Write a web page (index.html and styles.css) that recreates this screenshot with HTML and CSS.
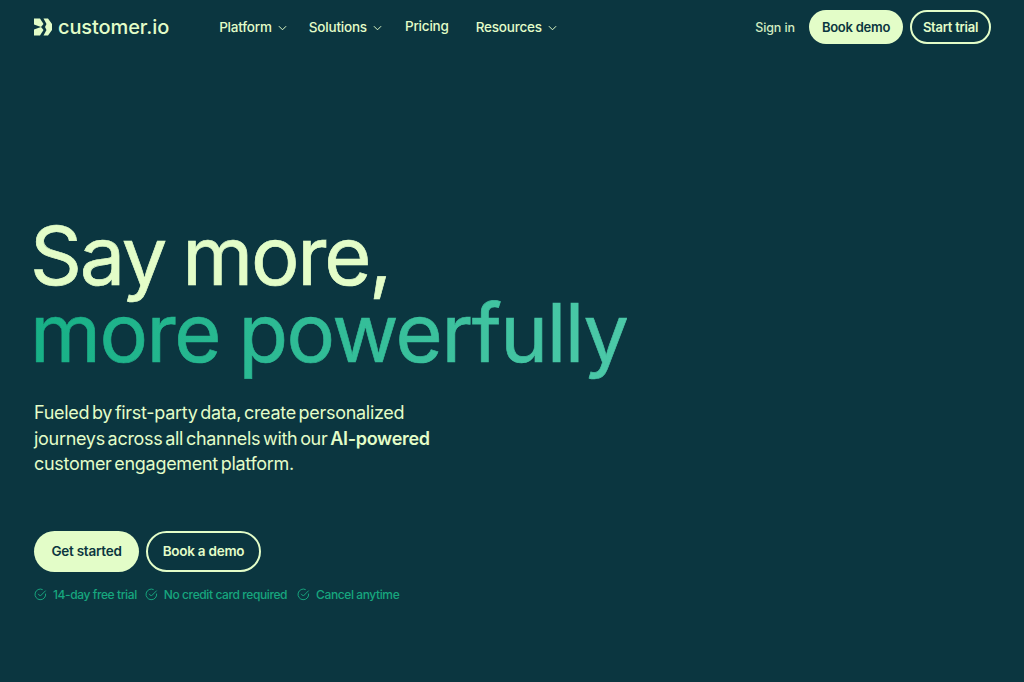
FILE: index.html
```html
<!DOCTYPE html>
<html lang="en">
<head>
  <meta charset="UTF-8">
  <meta name="viewport" content="width=device-width, initial-scale=1.0">
  <title>Customer.io</title>
  <link rel="stylesheet" href="styles.css">
</head>
<body>

<!-- Header -->
<header class="header">
  <a class="logo" href="#">
    <svg class="logo-mark" viewBox="0 0 18 18" width="18" height="18">
      <path fill="#e3fdc8" d="M0 .5h6L9.500 6 7 9 0 6.500z"/>
      <path fill="#e3fdc8" d="M0 17.500h6L9.500 12 7 9l-7 2.500z"/>
      <path fill="#e3fdc8" d="M9.500.5H14L18 6v6l-4 5.500H9.500L12.500 12 11 9l1.500-3z"/>
    </svg>
    <span>customer.io</span>
  </a>
  <nav class="nav">
    <a class="nav-item" href="#">Platform <svg class="chev" viewBox="0 0 10 6" width="9" height="6"><path d="M1 1l4 4 4-4"/></svg></a>
    <a class="nav-item" href="#">Solutions <svg class="chev" viewBox="0 0 10 6" width="9" height="6"><path d="M1 1l4 4 4-4"/></svg></a>
    <a class="nav-item nav-plain" href="#">Pricing</a>
    <a class="nav-item" href="#">Resources <svg class="chev" viewBox="0 0 10 6" width="9" height="6"><path d="M1 1l4 4 4-4"/></svg></a>
  </nav>
  <div class="header-actions">
    <a class="signin" href="#">Sign in</a>
    <a class="btn btn-solid btn-sm" href="#">Book demo</a>
    <a class="btn btn-line btn-sm" href="#">Start trial</a>
  </div>
</header>

<!-- Hero -->
<main class="hero">
  <h1 class="hero-title">Say more,<br><span class="accent">more powerfully</span></h1>
  <p class="hero-text">Fueled by first-party data, create personalized<br>journeys across all channels with our <strong>AI-powered</strong><br>customer engagement platform.</p>
  <div class="hero-buttons">
    <a class="btn btn-solid btn-lg" href="#">Get started</a>
    <a class="btn btn-line btn-lg" href="#">Book a demo</a>
  </div>
  <ul class="perks">
    <li><svg class="check" viewBox="0 0 12 12" width="13" height="13"><path d="M10.700 5.200A4.900 4.900 0 1 1 8 1.500"/><path d="M3.800 5.400l2 2 5-5"/></svg>14-day free trial</li>
    <li><svg class="check" viewBox="0 0 12 12" width="13" height="13"><path d="M10.700 5.200A4.900 4.900 0 1 1 8 1.500"/><path d="M3.800 5.400l2 2 5-5"/></svg>No credit card required</li>
    <li><svg class="check" viewBox="0 0 12 12" width="13" height="13"><path d="M10.700 5.200A4.900 4.900 0 1 1 8 1.500"/><path d="M3.800 5.400l2 2 5-5"/></svg>Cancel anytime</li>
  </ul>
</main>

</body>
</html>
```

FILE: styles.css
```css
* { box-sizing: border-box; }

body {
  margin: 0;
  height: 682px;
  overflow: hidden;
  background: #0b3640;
  color: #e3fdc8;
  font-family: Inter, "Noto Sans", sans-serif;
}

a {
  color: inherit;
  text-decoration: none;
}

.header {
  display: flex;
  align-items: center;
  height: 54px;
  padding: 0 33px 0 34px;
}

.logo {
  display: flex;
  align-items: center;
  gap: 6px;
  font-size: 20px;
  font-weight: 500;
  letter-spacing: -0.1px;
}

.nav {
  display: flex;
  align-items: center;
  gap: 22px;
  margin-left: 50px;
  font-size: 13.500px;
  font-weight: 500;
  letter-spacing: -0.2px;
}

.nav-item {
  display: flex;
  align-items: center;
  gap: 6px;
}

.nav-plain {
  margin-left: 1px;
  margin-right: 5px;
  margin-top: -2px;
}

.chev {
  margin-top: 2px;
  fill: none;
  stroke: #e3fdc8;
  stroke-width: 1.100;
}

.header-actions {
  display: flex;
  align-items: center;
  gap: 7px;
  margin-left: auto;
  font-size: 12.500px;
  font-weight: 500;
}

.signin {
  margin-right: 7px;
  color: #d3ecc0;
  letter-spacing: -0.1px;
}

.btn {
  display: flex;
  align-items: center;
  justify-content: center;
  border-radius: 999px;
  font-weight: 600;
  letter-spacing: -0.25px;
}

.btn-solid {
  background: #e3fdc8;
  color: #0b3640;
}

.btn-line {
  border: 2px solid #e3fdc8;
  color: #e3fdc8;
}

.btn-sm {
  height: 34px;
  font-size: 13px;
}

.btn-sm.btn-solid { width: 94px; }
.btn-sm.btn-line { width: 81px; }

.btn-lg {
  height: 41px;
  font-size: 13.500px;
}

.btn-lg.btn-solid { width: 105px; }
.btn-lg.btn-line { width: 115px; }

.hero {
  padding: 164px 0 0 34px;
}

.hero-title {
  margin: 0 0 0 -4px;
  font-size: 81px;
  font-weight: 400;
  line-height: 77px;
  letter-spacing: -2.300px;
  word-spacing: -3px;
  -webkit-text-stroke: 0.7px currentColor;
}

.accent {
  letter-spacing: -1.450px;
  background: linear-gradient(90deg, #17b086, #4cc9a8);
  -webkit-background-clip: text;
  background-clip: text;
  color: transparent;
}

.hero-text {
  margin: 28px 0 0;
  font-size: 18px;
  line-height: 25.500px;
  letter-spacing: -0.300px;
  word-spacing: -2px;
}

.hero-text strong {
  font-weight: 600;
}

.hero-buttons {
  display: flex;
  gap: 7px;
  margin-top: 54px;
}

.perks {
  display: flex;
  gap: 8px;
  margin: 15px 0 0;
  padding: 0;
  list-style: none;
  color: #17a67e;
  font-size: 12px;
  font-weight: 500;
  letter-spacing: -0.400px;
}

.perks li {
  display: flex;
  align-items: center;
  gap: 6px;
}

.perks li:last-child {
  margin-left: 2px;
}

.check {
  fill: none;
  stroke: #17a67e;
  stroke-width: 0.900;
}
```
